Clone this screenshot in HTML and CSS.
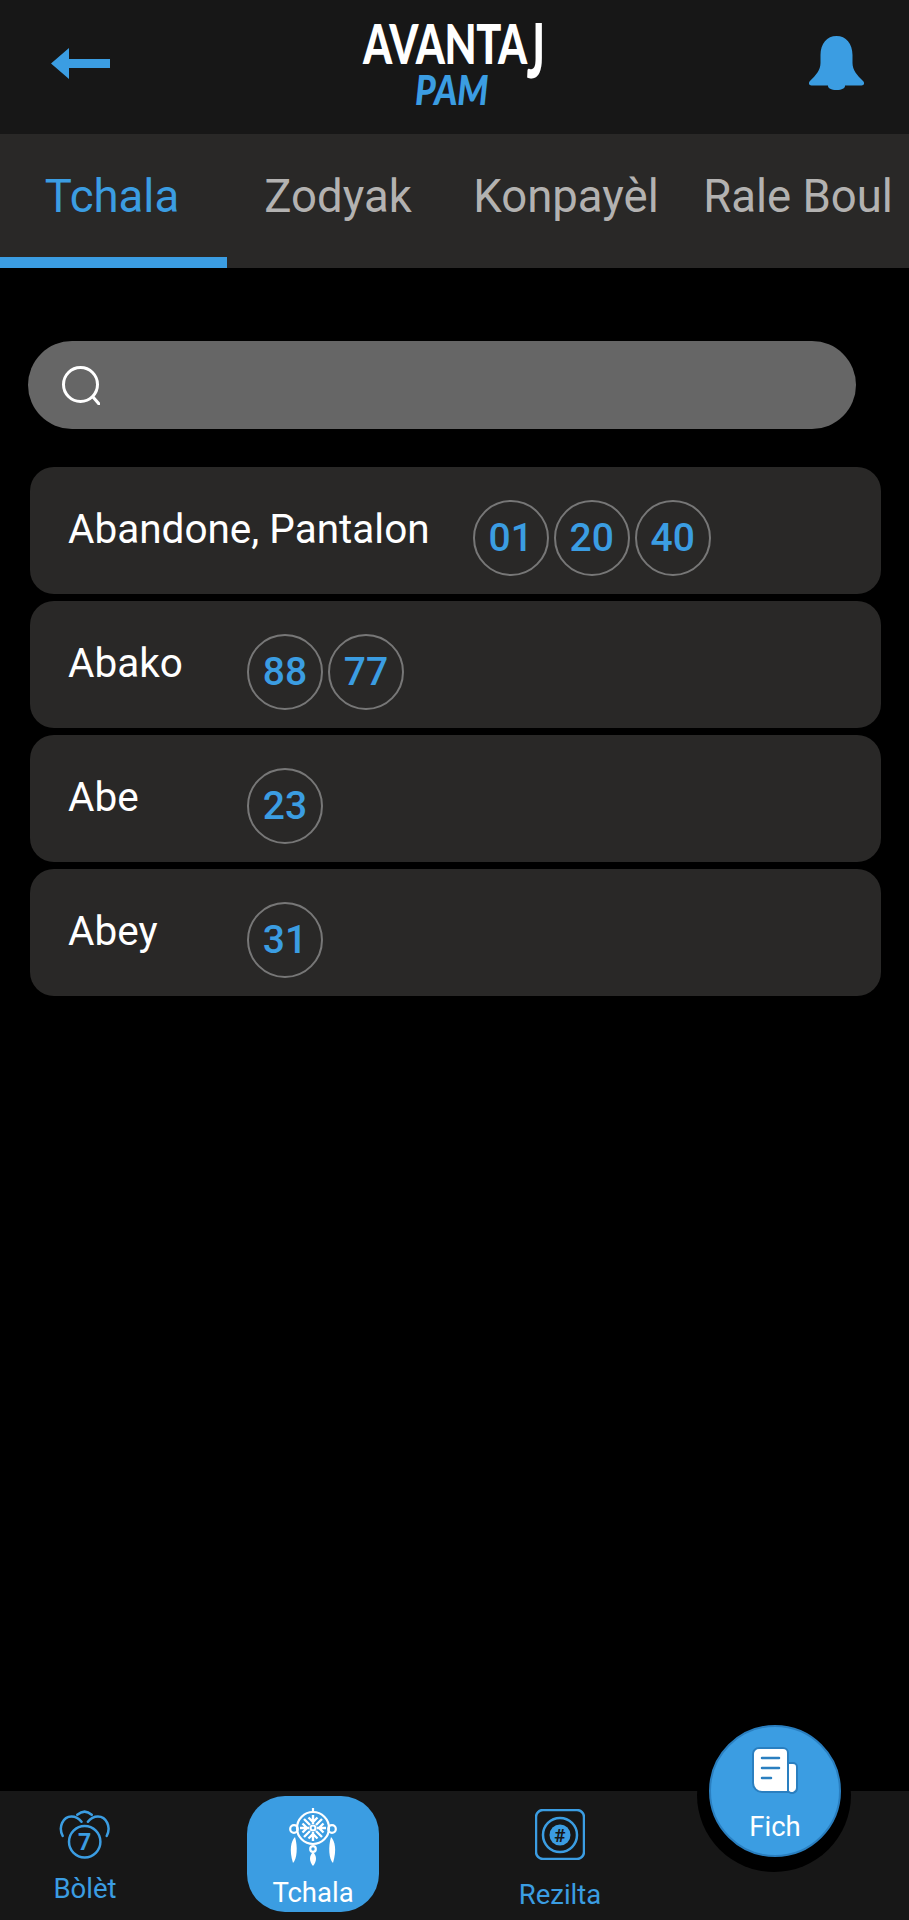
FILE: index.html
```html
<!DOCTYPE html>
<html lang="ht">
<head>
<meta charset="utf-8">
<title>Avantaj Pam</title>
<link rel="stylesheet" href="styles.css">
</head>
<body>
<div class="app">
  <header class="topbar">
    <svg class="back-icon" viewBox="0 0 59 31" aria-hidden="true"><path d="M0 15.5 18 0v11h41v9H18v11z"/></svg>
    <div class="logo">
      <div class="logo-main">AVANTA<span class="logo-j">J</span></div>
      <div class="logo-sub">PAM</div>
    </div>
    <svg class="bell-icon" viewBox="0 0 55 54" aria-hidden="true"><path d="M27.500 0C18 0 11.500 7.500 11.500 19v8C11.500 34 7 39 1 45c-2 2-1 4.500 1.500 4.500h50c2.500 0 3.500-2.500 1.500-4.500-6-6-10.500-11-10.500-18v-8C43.500 7.500 37 0 27.500 0z"/><path d="M19 49h17v1c0 2-3 4-8.500 4S19 52 19 50z" class="clapper"/></svg>
  </header>

  <nav class="tabs">
    <div class="tab tab-active">Tchala</div>
    <div class="tab">Zodyak</div>
    <div class="tab">Konpayèl</div>
    <div class="tab">Rale Boul</div>
  </nav>

  <main class="content">
    <div class="search">
      <svg class="search-icon" viewBox="0 0 38 39" aria-hidden="true"><circle cx="18.500" cy="18.500" r="17" /><path d="M31 31l6 7"/></svg>
    </div>
    <ul class="rows">
      <li class="row"><span class="name">Abandone, Pantalon</span><span class="balls"><span class="ball">01</span><span class="ball">20</span><span class="ball">40</span></span></li>
      <li class="row"><span class="name">Abako</span><span class="balls"><span class="ball">88</span><span class="ball">77</span></span></li>
      <li class="row"><span class="name">Abe</span><span class="balls"><span class="ball">23</span></span></li>
      <li class="row"><span class="name">Abey</span><span class="balls"><span class="ball">31</span></span></li>
    </ul>
  </main>

  <footer class="bottom">
    <div class="nav-item nav-bolet">
      <svg class="nav-icon icon-bolet" viewBox="0 0 52 50" aria-hidden="true">
        <circle cx="25.700" cy="31.700" r="15.700"/>
        <path d="M18.300 4.800Q25.700-1.500 32.700 4.800"/>
        <path d="M3.700 26C-1 17 4 6.500 12.500 6.500c4.500 0 7.500 2 10 5.200"/>
        <path d="M47.700 26C52.400 17 47.400 6.500 38.900 6.500c-4.500 0-7.500 2-10 5.200"/>
        <text x="25.700" y="39.500" class="seven">7</text>
      </svg>
      <span class="nav-label">Bòlèt</span>
    </div>
    <div class="nav-item nav-tchala">
      <div class="pill">
        <svg class="icon-dream" viewBox="0 0 50 58" aria-hidden="true">
          <path d="M25 0v4"/>
          <circle cx="25" cy="20" r="16"/>
          <circle cx="25" cy="20" r="2.500"/>
          <path d="M25 7v9M25 24v9M12 20h9M29 20h9M16 11l6 6M28 23l6 6M34 11l-6 6M22 23l-6 6M20.500 9.500l4.500 4.500 4.500-4.500M20.500 30.500l4.500-4.500 4.500 4.500M14.500 15.500l4.500 4.500-4.500 4.500M35.500 15.500l-4.500 4.500 4.500 4.500" class="thin"/>
          <circle cx="6" cy="21" r="3.800"/>
          <circle cx="44" cy="21" r="3.800"/>
          <circle cx="25" cy="41" r="2.800"/>
          <path class="feather" d="M7 29C3 33 1 42 5 55c4-4 5-16 2-26zM43 29c4 4 6 13 2 26-4-4-5-16-2-26zM25 44c-4 4-4 9 0 14 4-5 4-10 0-14z"/>
        </svg>
        <span class="pill-label">Tchala</span>
      </div>
    </div>
    <div class="nav-item nav-rezilta">
      <svg class="nav-icon icon-rezilta" viewBox="0 0 50 51" aria-hidden="true">
        <rect x="1" y="1" width="48" height="49" rx="7"/>
        <circle cx="25" cy="26" r="17"/>
        <circle class="solid" cx="25" cy="26" r="10.500"/>
        <text x="25" y="32.500" class="hash">#</text>
      </svg>
      <span class="nav-label">Rezilta</span>
    </div>
  </footer>

  <div class="notch"></div>
  <div class="fab">
    <svg class="icon-fich" viewBox="0 0 46 47" aria-hidden="true">
      <path class="sheet" d="M1 7a6 6 0 0 1 6-6h24a5 5 0 0 1 5 5v39H10a9 9 0 0 1-9-9z"/>
      <path class="sheet" d="M36 16h5a4 4 0 0 1 4 4v21a5 5 0 0 1-9 3z"/>
      <path class="sheet-lines" d="M10 11h17M10 21h17M10 31h9"/>
    </svg>
    <span class="fab-label">Fich</span>
  </div>
</div>
</body>
</html>
```

FILE: styles.css
```css
* { box-sizing: border-box; }
html, body { margin: 0; padding: 0; background: #000; }
body { font-family: Roboto, "Liberation Sans", sans-serif; }

.app {
  position: relative;
  width: 909px;
  height: 1920px;
  overflow: hidden;
  display: flex;
  flex-direction: column;
  background: #000;
}

/* header */
.topbar {
  position: relative;
  flex: none;
  height: 134px;
  background: #171717;
  display: flex;
  align-items: flex-start;
  justify-content: space-between;
  padding: 0 45px 0 51px;
}
.back-icon { width: 59px; height: 31px; margin-top: 48px; fill: #3b9de2; }
.bell-icon { width: 55px; height: 54px; margin-top: 36px; fill: #3b9de2; }
.logo {
  position: absolute;
  left: 363px;
  top: 24px;
  width: 186px;
  font-family: Lato, "Open Sans", sans-serif;
  font-weight: 900;
}
.logo-main {
  color: #fff;
  font-size: 52px;
  line-height: 38px;
  letter-spacing: -0.5px;
  white-space: nowrap;
  transform: scale(0.8, 1.05);
  transform-origin: 0 50%;
}
.logo-j { display: inline-block; transform: scaleY(1.4); transform-origin: 50% 15%; }
.logo-sub {
  color: #3b9de2;
  font-size: 41px;
  line-height: 40px;
  font-style: italic;
  margin: 8px 0 0 52px;
  width: 90px;
  white-space: nowrap;
  transform: scaleX(0.86);
  transform-origin: 0 50%;
}

/* tabs */
.tabs {
  flex: none;
  height: 134px;
  background: #292827;
  display: grid;
  grid-template-columns: 223px 230px 226px 238px;
  color: #b3b2b1;
  font-size: 45.500px;
}
.tab {
  display: flex;
  align-items: center;
  justify-content: center;
  height: 134px;
  padding-bottom: 9px;
  white-space: nowrap;
  position: relative;
}
.tab-active { color: #3b9de2; width: 227px; padding-right: 3px; padding-top: 2px; border-bottom: 11px solid #3b9de2; padding-bottom: 0; }

/* content */
.content { flex: 1; padding: 73px 28px 0; }
.search {
  width: 828px;
  height: 88px;
  background: #666;
  border-radius: 44px;
  display: flex;
  align-items: center;
  padding-left: 34px;
}
.search-icon { width: 38px; height: 39px; fill: none; stroke: #fff; stroke-width: 3; stroke-linecap: round; }

.rows {
  list-style: none;
  margin: 38px 0 0 2px;
  padding: 0;
  display: flex;
  flex-direction: column;
  gap: 7px;
}
.row {
  width: 851px;
  height: 127px;
  background: #292827;
  border-radius: 24px;
  padding: 33px 0 0 38px;
  display: flex;
  align-items: flex-start;
}
.name {
  min-width: 136px;
  margin: 6px 43px 0 0;
  color: #fff;
  font-size: 40.500px;
  line-height: 46px;
  white-space: nowrap;
}
.balls { display: flex; gap: 5px; }
.ball {
  width: 76px;
  height: 76px;
  border: 2.500px solid #777;
  border-radius: 50%;
  display: flex;
  align-items: center;
  justify-content: center;
  color: #3b9de2;
  font-size: 39px;
  font-weight: 500;
  padding-bottom: 1px;
}

/* bottom nav */
.bottom {
  flex: none;
  height: 129px;
  background: #171717;
  display: grid;
  grid-template-columns: 170px 286px 208px;
}
.nav-item {
  display: flex;
  flex-direction: column;
  align-items: center;
  color: #3b9de2;
}
.nav-label { font-size: 27.500px; line-height: 32px; }
.nav-icon { fill: none; stroke: #3b9de2; stroke-width: 2.500; }
.nav-bolet { padding-top: 19px; }
.icon-bolet { width: 52px; height: 50px; margin-bottom: 13px; stroke-linecap: round; }
.seven { fill: #3b9de2; stroke: none; font-size: 23px; font-weight: 700; text-anchor: middle; font-family: Roboto, sans-serif; }
.nav-rezilta { padding-top: 18px; }
.icon-rezilta { width: 50px; height: 51px; margin-bottom: 19px; }
.solid { fill: #3b9de2; stroke: none; }
.hash { fill: #171717; stroke: none; font-size: 19px; font-weight: 700; text-anchor: middle; font-family: Roboto, sans-serif; }

.nav-tchala { padding-top: 5px; }
.pill {
  width: 132px;
  height: 116px;
  background: #3b9de2;
  border-radius: 38px;
  display: flex;
  flex-direction: column;
  align-items: center;
  padding-top: 12px;
  color: #fff;
}
.icon-dream { width: 50px; height: 58px; fill: none; stroke: #fff; stroke-width: 2.200; margin-bottom: 11px; }
.icon-dream .thin { stroke-width: 2.400; }
.icon-dream .feather { fill: #fff; stroke: none; }
.pill-label { font-size: 27.500px; line-height: 32px; }

/* floating button */
.notch {
  position: absolute;
  left: 697px;
  top: 1718px;
  width: 154px;
  height: 154px;
  border-radius: 50%;
  background: #000;
}
.fab {
  position: absolute;
  left: 709px;
  top: 1725px;
  width: 132px;
  height: 132px;
  border-radius: 50%;
  background: #3b9de2;
  border: 2px solid #2a7fc0;
  display: flex;
  flex-direction: column;
  align-items: center;
  padding-top: 20px;
  color: #fff;
}
.icon-fich { width: 46px; height: 47px; margin-bottom: 17px; fill: #fff; stroke: #2a7fc0; stroke-width: 2; }
.icon-fich .sheet-lines { fill: none; stroke: #2a7fc0; stroke-width: 2.500; stroke-linecap: round; }
.fab-label { font-size: 27.500px; line-height: 32px; }
```
